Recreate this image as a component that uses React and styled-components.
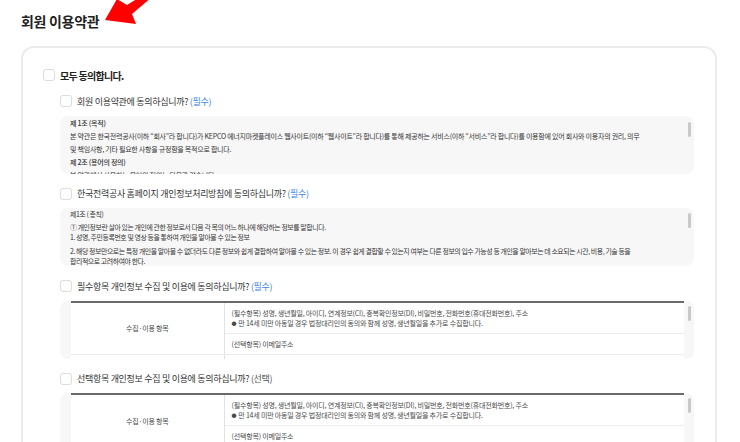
import styled, { createGlobalStyle } from 'styled-components'

const GlobalStyle = createGlobalStyle`
  * { box-sizing: border-box; }
  body {
    margin: 0;
    background: #fff;
    color: #333;
    font-family: "Noto Sans CJK KR", "Noto Sans", sans-serif;
  }
`

const Page = styled.div`
  padding: 11px 23px 0 21px;
  height: 442px;
  overflow: hidden;
`

const Header = styled.div`
  position: relative;
  height: 20px;
`

const Title = styled.h1`
  margin: 0;
  font-size: 14px;
  line-height: 20px;
  font-weight: 700;
  letter-spacing: -0.3px;
  color: #222;
`

const Arrow = styled.svg`
  position: absolute;
  left: -21px;
  top: -11px;
  width: 200px;
  height: 40px;
  overflow: visible;
`

const Card = styled.section`
  margin-top: 15px;
  border: 2px solid #ebebeb;
  border-radius: 13px;
  padding: 20px 21px 0 20px;
  height: 420px;
`

const Row = styled.label`
  display: flex;
  align-items: center;
  height: 14px;
  gap: 5px;
`

const Checkbox = styled.span`
  flex: none;
  width: 12px;
  height: 12px;
  border: 1px solid #dcdcdc;
  border-radius: 3px;
  background: #fff;
`

const AllLabel = styled.span`
  font-size: 10px;
  font-weight: 700;
  letter-spacing: -0.7px;
  color: #222;
`

const ItemList = styled.div`
  display: flex;
  flex-direction: column;
  gap: 13px;
  margin: 12px 0 0 17px;
`

const Item = styled.div`
  display: flex;
  flex-direction: column;
  gap: 7.5px;
`

const ItemLabel = styled.span`
  font-size: 9px;
  letter-spacing: -0.3px;
  color: #333;
  white-space: nowrap;
`

const Tag = styled.span`
  color: ${p => (p.$optional ? '#555' : '#3d86e6')};
`

const ScrollBox = styled.div`
  position: relative;
  height: 58px;
  background: #f7f7f7;
  border-radius: 8px;
  overflow: hidden;
  padding: ${p => (p.$table ? '0 10px 0 11px' : '1px 8px 0 10px')};
`

const Thumb = styled.span`
  position: absolute;
  right: 3px;
  top: ${p => p.$top}px;
  width: 3px;
  height: 15px;
  border-radius: 2px;
  background: #c9c9c9;
`

const Terms = styled.div`
  font-size: ${p => p.$size}px;
  letter-spacing: ${p => p.$track}px;
  line-height: ${p => p.$lh}px;
  color: #333;
  white-space: nowrap;
`

const Para = styled.p`
  margin: ${p => p.$gap || 0}px 0 0;
  font-weight: ${p => (p.$strong ? 500 : 400)};
`

const Table = styled.table`
  width: 613px;
  border-collapse: collapse;
  border-top: 2px solid #6a6a6a;
  background: #fff;
  font-size: 7px;
  letter-spacing: -0.2px;
  line-height: 10px;
  color: #4a4a4a;
`

const Th = styled.th`
  width: 153px;
  font-weight: 400;
  text-align: center;
  border-right: 1px solid #e2e2e2;
  border-bottom: 1px solid #ececec;
`

const Td = styled.td`
  padding: 5px 7px;
  border-bottom: 1px solid #ececec;
  white-space: nowrap;
`

const Bullet = styled.span`
  font-size: 5px;
  vertical-align: 1px;
  margin-right: 2px;
`

const CollectTable = () => (
  <Table>
    <tbody>
      <tr>
        <Th rowSpan={2}>수집·이용 항목</Th>
        <Td>
          (필수항목) 성명, 생년월일, 아이디, 연계정보(CI), 중복확인정보(DI), 비밀번호, 전화번호(휴대전화번호), 주소
          <br />
          <Bullet>●</Bullet>만 14세 미만 아동일 경우 법정대리인의 동의와 함께 성명, 생년월일을 추가로 수집합니다.
        </Td>
      </tr>
      <tr>
        <Td>(선택항목) 이메일주소</Td>
      </tr>
      <tr>
        <Th>수집·이용 목적</Th>
        <Td>회원제 서비스 이용에 따른 본인 확인, 개인 식별, 불량회원의 부정 이용 방지</Td>
      </tr>
    </tbody>
  </Table>
)

const App = () => (
  <>
    <GlobalStyle />
    <Page>
      <Header>
        <Title>회원 이용약관</Title>
        <Arrow viewBox="0 0 200 40">
          <polygon
            points="105,20 117,-1 127,5 140,-3 152,-3 132,14 136,24"
            fill="#ff0000"
          />
        </Arrow>
      </Header>

      <Card>
        <Row>
          <Checkbox />
          <AllLabel>모두 동의합니다.</AllLabel>
        </Row>

        <ItemList>
          <Item>
            <Row>
              <Checkbox />
              <ItemLabel>회원 이용약관에 동의하십니까? <Tag>(필수)</Tag></ItemLabel>
            </Row>
            <ScrollBox>
              <Terms $size={7} $track={-0.25} $lh={13}>
                <Para $strong>제 1조 (목적)</Para>
                <Para>
                  본 약관은 한국전력공사(이하 “회사”라 합니다)가 KEPCO 에너지마켓플레이스 웹사이트(이하 “웹사이트”라 합니다)를 통해 제공하는 서비스(이하 “서비스”라 합니다)를 이용함에 있어 회사와 이용자의 권리, 의무
                  <br />
                  및 책임사항, 기타 필요한 사항을 규정함을 목적으로 합니다.
                </Para>
                <Para $strong>제 2조 (용어의 정의)</Para>
                <Para>본 약관에서 사용하는 용어의 정의는 다음과 같습니다.</Para>
              </Terms>
              <Thumb $top={6} />
            </ScrollBox>
          </Item>

          <Item>
            <Row>
              <Checkbox />
              <ItemLabel>한국전력공사 홈페이지 개인정보처리방침에 동의하십니까? <Tag>(필수)</Tag></ItemLabel>
            </Row>
            <ScrollBox>
              <Terms $size={6.9} $track={-0.4} $lh={10.5}>
                <Para>제1조 ( 총칙)</Para>
                <Para $gap={2}>
                  ① 개인정보란 살아 있는 개인에 관한 정보로서 다음 각 목의 어느 하나에 해당하는 정보를 말합니다.
                  <br />
                  1. 성명, 주민등록번호 및 영상 등을 통하여 개인을 알아볼 수 있는 정보
                </Para>
                <Para $gap={3}>
                  2. 해당 정보만으로는 특정 개인을 알아볼 수 없더라도 다른 정보와 쉽게 결합하여 알아볼 수 있는 정보. 이 경우 쉽게 결합할 수 있는지 여부는 다른 정보의 입수 가능성 등 개인을 알아보는 데 소요되는 시간, 비용, 기술 등을
                  <br />
                  합리적으로 고려하여야 한다.
                </Para>
              </Terms>
              <Thumb $top={5} />
            </ScrollBox>
          </Item>

          <Item>
            <Row>
              <Checkbox />
              <ItemLabel>필수항목 개인정보 수집 및 이용에 동의하십니까? <Tag>(필수)</Tag></ItemLabel>
            </Row>
            <ScrollBox $table>
              <CollectTable />
              <Thumb $top={5} />
            </ScrollBox>
          </Item>

          <Item>
            <Row>
              <Checkbox />
              <ItemLabel>선택항목 개인정보 수집 및 이용에 동의하십니까? <Tag $optional>(선택)</Tag></ItemLabel>
            </Row>
            <ScrollBox $table>
              <CollectTable />
              <Thumb $top={5} />
            </ScrollBox>
          </Item>
        </ItemList>
      </Card>
    </Page>
  </>
)

export default App
